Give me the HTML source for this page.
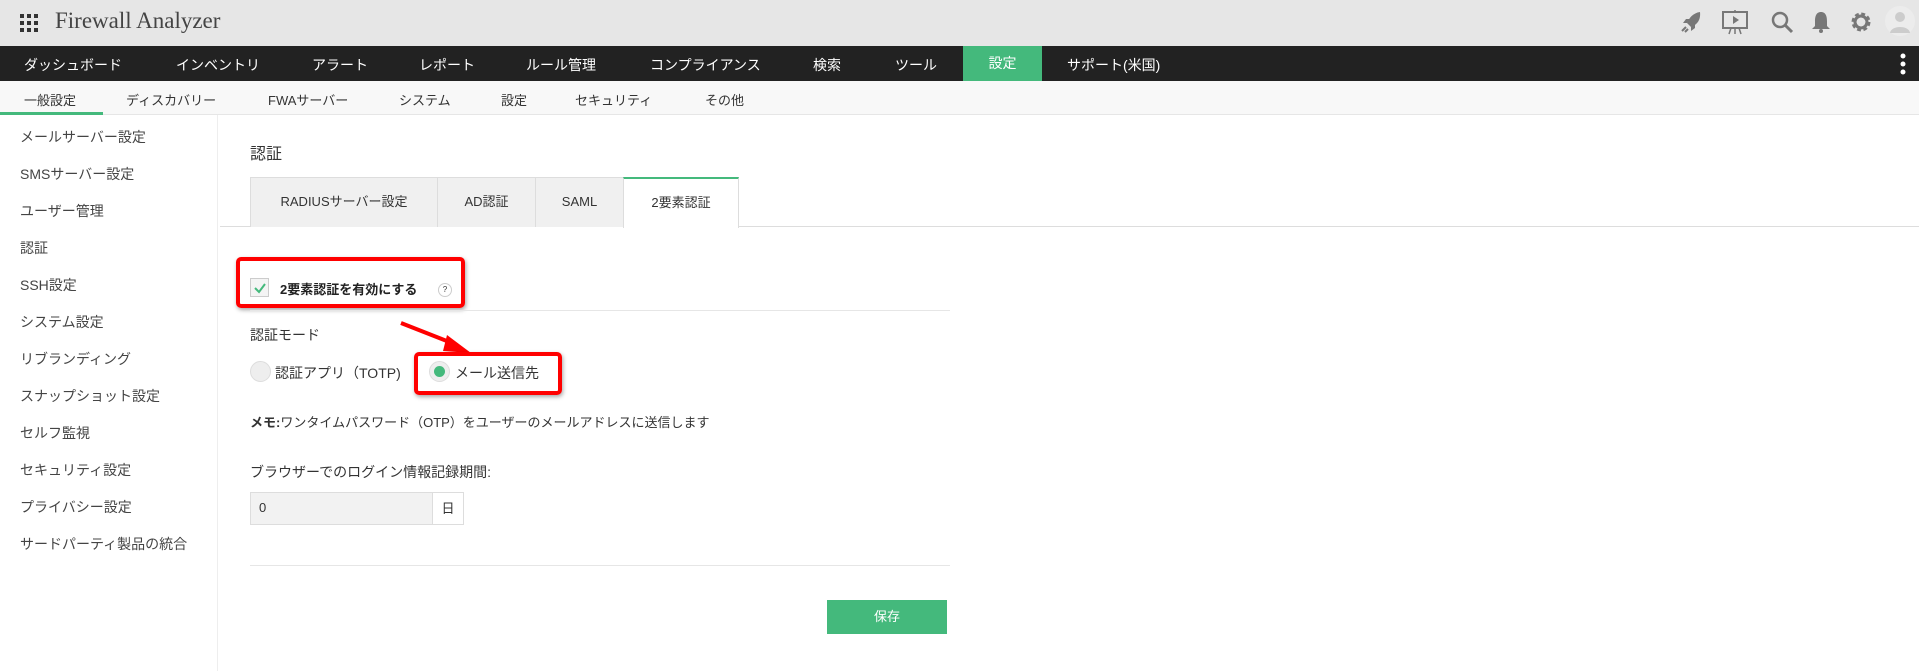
<!DOCTYPE html>
<html><head><meta charset="utf-8"><style>
*{margin:0;padding:0;box-sizing:border-box}
body{width:1919px;height:671px;overflow:hidden;background:#fff;font-family:"Liberation Sans","Noto Sans CJK JP",sans-serif;font-size:14px;color:#333;position:relative}
.a{position:absolute;white-space:nowrap}
#top{position:absolute;left:0;top:0;width:1919px;height:46px;background:#e6e6e6}
#nav{position:absolute;left:0;top:46px;width:1919px;height:35px;background:#222;color:#fff}
#nav .a{top:9px;font-size:14px}
#sub{position:absolute;left:0;top:81px;width:1919px;height:34px;background:#f8f8f8;border-bottom:1px solid #e6e6e6}
#sub .a{top:9px;font-size:13px;color:#333}
#side{position:absolute;left:0;top:115px;width:218px;height:556px;background:#fff;border-right:1px solid #eee}
#side .a{left:20px;font-size:14px;color:#444}
.tab{position:absolute;top:177px;height:50px;background:#f0f0f0;border:1px solid #ddd;border-bottom:none;text-align:center;line-height:48px;font-size:13px}
.red{position:absolute;border:4px solid #f00;border-radius:5px;box-shadow:1px 2px 4px rgba(0,0,0,.35)}
</style></head><body>
<div id="top">
 <svg class="a" style="left:20px;top:14px" width="18" height="18"><g fill="#333"><rect x="0" y="0" width="4" height="4"/><rect x="7" y="0" width="4" height="4"/><rect x="14" y="0" width="4" height="4"/><rect x="0" y="7" width="4" height="4"/><rect x="7" y="7" width="4" height="4"/><rect x="14" y="7" width="4" height="4"/><rect x="0" y="14" width="4" height="4"/><rect x="7" y="14" width="4" height="4"/><rect x="14" y="14" width="4" height="4"/></g></svg>
 <div class="a" style="left:55px;top:8px;font-family:'Liberation Serif',serif;font-size:23px;color:#444">Firewall Analyzer</div>
 <svg class="a" style="left:1680px;top:10px" width="24" height="24"><path d="M20 2 C13 3 9 8 7 13 L11 17 C16 15 21 11 20 2Z" fill="#777"/><path d="M7 13 L3 13 L6 9 L10 9Z M11 17 L11 21 L15 18 L15 14Z" fill="#777"/><path d="M6 17 L2 21 M8 19 L5 22" stroke="#777" stroke-width="2"/></svg>
 <svg class="a" style="left:1721px;top:9px" width="28" height="26"><rect x="2" y="3" width="24" height="16" fill="none" stroke="#777" stroke-width="2"/><path d="M12 7 L18 11 L12 15Z" fill="#777"/><path d="M14 1 V3 M14 19 V25 M8 25 L10 19 M20 25 L18 19" stroke="#777" stroke-width="1.5"/></svg>
 <svg class="a" style="left:1770px;top:10px" width="24" height="24"><circle cx="10" cy="10" r="7" fill="none" stroke="#777" stroke-width="2.5"/><path d="M15 15 L22 22" stroke="#777" stroke-width="3"/></svg>
 <svg class="a" style="left:1811px;top:10px" width="20" height="24"><path d="M10 2 C5 2 4 7 4 11 L4 16 L1 19 L19 19 L16 16 L16 11 C16 7 15 2 10 2Z" fill="#777"/><circle cx="10" cy="21" r="2" fill="#777"/></svg>
 <svg class="a" style="left:1849px;top:10px" width="24" height="24"><circle cx="12" cy="12" r="7" fill="none" stroke="#777" stroke-width="5" stroke-dasharray="3.3 2.2"/><circle cx="12" cy="12" r="6" fill="none" stroke="#777" stroke-width="3"/></svg>
 <svg class="a" style="left:1885px;top:4px" width="30" height="34"><circle cx="15" cy="17" r="15" fill="#ececec"/><circle cx="15" cy="13" r="5" fill="#ccc"/><path d="M5 29 C6 21 24 21 25 29Z" fill="#ccc"/></svg>
</div>
<div id="nav">
 <div class="a" style="left:24px">ダッシュボード</div>
 <div class="a" style="left:176px">インベントリ</div>
 <div class="a" style="left:312px">アラート</div>
 <div class="a" style="left:419px">レポート</div>
 <div class="a" style="left:526px">ルール管理</div>
 <div class="a" style="left:650px">コンプライアンス</div>
 <div class="a" style="left:813px">検索</div>
 <div class="a" style="left:895px">ツール</div>
 <div class="a" style="left:963px;top:0;width:79px;height:35px;background:#44b97c;text-align:center;line-height:35px">設定</div>
 <div class="a" style="left:1067px">サポート(米国)</div>
 <svg class="a" style="left:1900px;top:7px" width="6" height="22"><circle cx="3" cy="3" r="2.5" fill="#fff"/><circle cx="3" cy="11" r="2.5" fill="#fff"/><circle cx="3" cy="19" r="2.5" fill="#fff"/></svg>
</div>
<div id="sub">
 <div class="a" style="left:24px">一般設定</div>
 <div class="a" style="left:126px">ディスカバリー</div>
 <div class="a" style="left:268px">FWAサーバー</div>
 <div class="a" style="left:399px">システム</div>
 <div class="a" style="left:501px">設定</div>
 <div class="a" style="left:575px">セキュリティ</div>
 <div class="a" style="left:705px">その他</div>
 <div class="a" style="left:0;top:31px;width:103px;height:3px;background:#44b97c"></div>
</div>
<div id="side">
 <div class="a" style="top:12px">メールサーバー設定</div>
 <div class="a" style="top:49px">SMSサーバー設定</div>
 <div class="a" style="top:86px">ユーザー管理</div>
 <div class="a" style="top:123px">認証</div>
 <div class="a" style="top:160px">SSH設定</div>
 <div class="a" style="top:197px">システム設定</div>
 <div class="a" style="top:234px">リブランディング</div>
 <div class="a" style="top:271px">スナップショット設定</div>
 <div class="a" style="top:308px">セルフ監視</div>
 <div class="a" style="top:345px">セキュリティ設定</div>
 <div class="a" style="top:382px">プライバシー設定</div>
 <div class="a" style="top:419px">サードパーティ製品の統合</div>
</div>
<div class="a" style="left:250px;top:140px;font-size:16px">認証</div>
<div class="a" style="left:220px;top:226px;width:1699px;height:1px;background:#ddd"></div>
<div class="tab" style="left:250px;width:188px">RADIUSサーバー設定</div>
<div class="tab" style="left:437px;width:99px">AD認証</div>
<div class="tab" style="left:535px;width:89px">SAML</div>
<div class="tab" style="left:623px;width:116px;background:#fff;border-top:2px solid #44b97c;height:51px">2要素認証</div>
<div class="a" style="left:250px;top:278px;width:19px;height:19px;border:1px solid #ccc;background:#f4f4f4"></div>
<svg class="a" style="left:253px;top:281px" width="14" height="14"><path d="M2 7 L6 11 L12 3" fill="none" stroke="#44b97c" stroke-width="2"/></svg>
<div class="a" style="left:280px;top:279px;font-size:13px;font-weight:bold;color:#222">2要素認証を有効にする</div>
<div class="a" style="left:438px;top:283px;width:14px;height:14px;border:1px solid #ccc;border-radius:50%;font-size:8px;text-align:center;line-height:12px">?</div>
<div class="red" style="left:236px;top:257px;width:229px;height:51px"></div>
<div class="a" style="left:250px;top:310px;width:700px;height:1px;background:#e6e6e6"></div>
<div class="a" style="left:250px;top:325px;font-size:14px">認証モード</div>
<svg class="a" style="left:399px;top:321px" width="75" height="34"><path d="M2 2 L58 24" stroke="#f00" stroke-width="4"/><path d="M48 14 L72 32 L44 30Z" fill="#f00"/></svg>
<div class="a" style="left:250px;top:361px;width:21px;height:21px;border:1px solid #ddd;border-radius:50%;background:#eee"></div>
<div class="a" style="left:275px;top:363px;font-size:14px">認証アプリ（TOTP)</div>
<div class="a" style="left:429px;top:361px;width:21px;height:21px;border:1px solid #ddd;border-radius:50%;background:#eee"></div>
<div class="a" style="left:434px;top:366px;width:11px;height:11px;border-radius:50%;background:#44b97c"></div>
<div class="a" style="left:455px;top:363px;font-size:14px">メール送信先</div>
<div class="red" style="left:414px;top:352px;width:148px;height:43px"></div>
<div class="a" style="left:250px;top:412px;font-size:13px"><b>メモ:</b>ワンタイムパスワード（OTP）をユーザーのメールアドレスに送信します</div>
<div class="a" style="left:250px;top:462px;font-size:14px">ブラウザーでのログイン情報記録期間:</div>
<div class="a" style="left:250px;top:492px;width:214px;height:33px;border:1px solid #ddd;background:#f2f2f2"></div>
<div class="a" style="left:432px;top:492px;width:32px;height:33px;border:1px solid #ddd;background:#fff;text-align:center;line-height:31px;font-size:13px">日</div>
<div class="a" style="left:259px;top:500px;font-size:13px">0</div>
<div class="a" style="left:250px;top:565px;width:700px;height:1px;background:#e6e6e6"></div>
<div class="a" style="left:827px;top:600px;width:120px;height:34px;background:#44b97c;color:#fff;text-align:center;line-height:34px;font-size:13px">保存</div>
</body></html>
